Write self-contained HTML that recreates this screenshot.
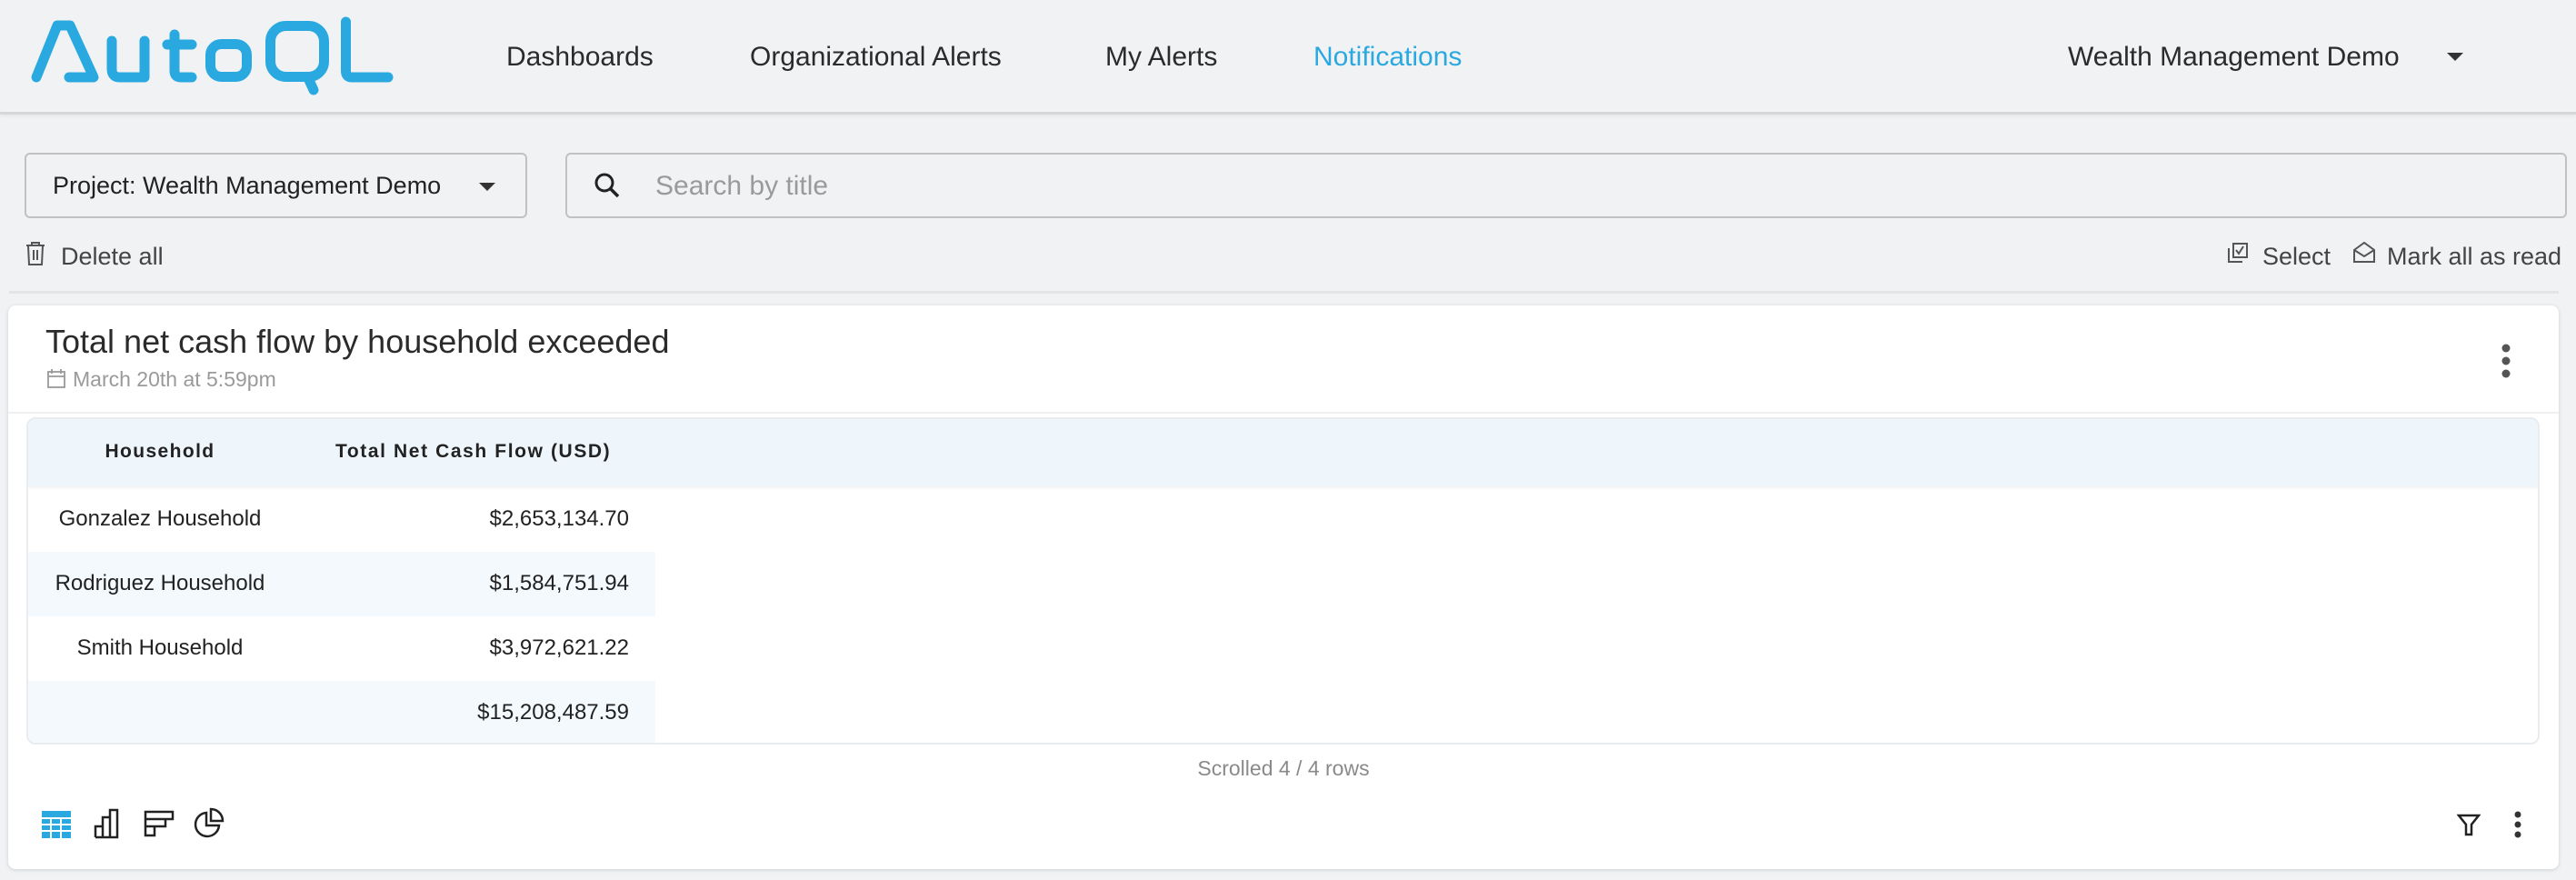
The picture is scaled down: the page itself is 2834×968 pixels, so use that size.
<!DOCTYPE html>
<html><head><meta charset="utf-8"><style>
*{margin:0;padding:0;box-sizing:border-box}
body{width:2834px;height:968px;background:#f1f2f4;font-family:"Liberation Sans",Arial,sans-serif;color:#2b2b2b;position:relative;overflow:hidden}
.a{position:absolute;white-space:nowrap}
.nav{font-size:30px;top:46px;color:#2b2b2b}
.box{position:absolute;border:2px solid #bfc1c4;border-radius:6px;background:#f1f2f4}
.card{position:absolute;left:9px;top:336px;width:2806px;height:620px;background:#fff;border-radius:8px;box-shadow:0 1px 4px rgba(0,0,0,.15)}
.cell{position:absolute;font-size:24px;color:#222}
</style></head><body>
<div class="a" style="left:0;top:0;width:2834px;height:126px;border-bottom:3px solid #d6d7d9;box-shadow:0 2px 4px rgba(0,0,0,.05)"></div>
<!-- logo -->
<svg class="a" style="left:0;top:0" width="440" height="110" viewBox="0 0 440 110">
<g fill="none" stroke="#2aa9e0" stroke-width="11" stroke-linejoin="round" stroke-linecap="round">
<path d="M40 85 L63 28 H77 L103 85 H76"/>
<path d="M123 45 V76 Q123 85 132 85 H159 V45"/>
<path d="M192 38 V78 Q192 85 199 85 H211"/>
<path d="M184 49 H211"/>
<rect x="231.5" y="48.5" width="40" height="36" rx="12"/>
<rect x="297.5" y="28.5" width="59" height="56" rx="17"/>
<path d="M339 86 L345 99"/>
<path d="M380.5 24 V78 Q380.5 85 387 85 H427"/>
</g></svg>
<div class="a nav" style="left:557px">Dashboards</div>
<div class="a nav" style="left:825px">Organizational Alerts</div>
<div class="a nav" style="left:1216px">My Alerts</div>
<div class="a nav" style="left:1445px;color:#2aa9e0">Notifications</div>
<div class="a nav" style="left:2275px">Wealth Management Demo</div>
<div class="a" style="left:2692px;top:58px;border-left:9px solid transparent;border-right:9px solid transparent;border-top:9px solid #333"></div>

<div class="box" style="left:27px;top:168px;width:553px;height:72px"></div>
<div class="a" style="left:58px;top:189px;font-size:27px;color:#222">Project: Wealth Management Demo</div>
<div class="a" style="left:527px;top:201px;border-left:9px solid transparent;border-right:9px solid transparent;border-top:9px solid #333"></div>
<div class="box" style="left:622px;top:168px;width:2202px;height:72px"></div>
<svg class="a" style="left:652px;top:188px" width="32" height="32" viewBox="0 0 32 32"><circle cx="13" cy="13" r="9" fill="none" stroke="#222" stroke-width="3"/><path d="M19.5 19.5 L28 28" stroke="#222" stroke-width="3.5"/></svg>
<div class="a" style="left:721px;top:188px;font-size:30px;color:#9a9a9a">Search by title</div>

<svg class="a" style="left:27px;top:265px" width="24" height="28" viewBox="0 0 24 28"><path d="M2 5H22M8 5V2H16V5M4 5L5 26H19L20 5M10 10V21M14 10V21" fill="none" stroke="#555" stroke-width="2"/></svg>
<div class="a" style="left:67px;top:267px;font-size:27px;color:#444">Delete all</div>
<svg class="a" style="left:2449px;top:266px" width="26" height="26" viewBox="0 0 26 26"><rect x="8" y="2" width="15" height="15" fill="none" stroke="#555" stroke-width="2"/><path d="M3 7V22H18M11 9L14 13L19 5" fill="none" stroke="#555" stroke-width="2"/></svg>
<div class="a" style="left:2489px;top:267px;font-size:27px;color:#444">Select</div>
<svg class="a" style="left:2588px;top:265px" width="26" height="26" viewBox="0 0 26 26"><path d="M2 10L13 2L24 10V23H2Z M2 10L13 17L24 10" fill="none" stroke="#555" stroke-width="2"/></svg>
<div class="a" style="left:2626px;top:267px;font-size:27px;color:#444">Mark all as read</div>
<div class="a" style="left:10px;top:320px;width:2805px;height:3px;background:#e3e4e6"></div>

<div class="card">
<div class="a" style="left:41px;top:19px;font-size:36px;color:#2b2b2b">Total net cash flow by household exceeded</div>
<svg class="a" style="left:43px;top:69px" width="20" height="22" viewBox="0 0 20 22"><rect x="1" y="4" width="18" height="17" fill="none" stroke="#999" stroke-width="1.8"/><path d="M1 9H19M5 1V6M15 1V6" stroke="#999" stroke-width="1.8"/></svg>
<div class="a" style="left:71px;top:68px;font-size:23px;color:#9a9a9a">March 20th at 5:59pm</div>
<svg class="a" style="left:2742px;top:41px" width="12" height="40" viewBox="0 0 12 40"><circle cx="6" cy="6" r="4.5" fill="#555"/><circle cx="6" cy="20" r="4.5" fill="#555"/><circle cx="6" cy="34" r="4.5" fill="#555"/></svg>
<div class="a" style="left:0;top:117px;width:2806px;height:2px;background:#eef0f2"></div>
<!-- table -->
<div class="a" style="left:20px;top:123px;width:2765px;height:360px;border:2px solid #e8ecef;border-radius:10px;overflow:hidden;background:#fff">
 <div class="a" style="left:0;top:0;width:2765px;height:74px;background:#eef6fc;box-shadow:0 2px 3px rgba(0,0,0,.06)"></div>
 <div class="a" style="left:0;top:146px;width:690px;height:71px;background:#f3f9fd"></div>
 <div class="a" style="left:0;top:288px;width:690px;height:72px;background:#f3f9fd"></div>
 <div class="a" style="left:0;top:24px;width:290px;text-align:center;font-size:21px;font-weight:bold;letter-spacing:1.4px;color:#222">Household</div>
 <div class="a" style="left:338px;top:24px;font-size:21px;font-weight:bold;letter-spacing:1.6px;color:#222">Total Net Cash Flow (USD)</div>
 <div class="cell" style="left:0;width:290px;text-align:center;top:96px">Gonzalez Household</div>
 <div class="cell" style="left:0;width:290px;text-align:center;top:167px">Rodriguez Household</div>
 <div class="cell" style="left:0;width:290px;text-align:center;top:238px">Smith Household</div>
 <div class="cell" style="right:2100px;top:96px">$2,653,134.70</div>
 <div class="cell" style="right:2100px;top:167px">$1,584,751.94</div>
 <div class="cell" style="right:2100px;top:238px">$3,972,621.22</div>
 <div class="cell" style="right:2100px;top:309px">$15,208,487.59</div>
</div>
<div class="a" style="left:0;width:2806px;text-align:center;top:496px;font-size:23px;color:#8a8a8a">Scrolled 4 / 4 rows</div>
<!-- viz icons -->
<svg class="a" style="left:36px;top:555px" width="34" height="32" viewBox="0 0 34 32"><rect x="1" y="1" width="32" height="30" fill="#2aa9e0"/><path d="M1 9H33M1 16H33M1 23H33M11 9V31M22 9V31" stroke="#fff" stroke-width="2"/></svg>
<svg class="a" style="left:94px;top:553px" width="30" height="34" viewBox="0 0 30 34"><path d="M2 32V20H10V32M10 32V10H18V32M18 32V2H26V32H2" fill="none" stroke="#222" stroke-width="2.5"/></svg>
<svg class="a" style="left:149px;top:555px" width="34" height="32" viewBox="0 0 34 32"><path d="M2 2H32V10H2ZM2 10H24V18H2ZM2 18H12V28H2Z" fill="none" stroke="#222" stroke-width="2.5"/></svg>
<svg class="a" style="left:204px;top:552px" width="34" height="36" viewBox="0 0 34 36"><path d="M14 6A13 13 0 1 0 28 20H14Z" fill="none" stroke="#222" stroke-width="2.5"/><path d="M19 2A13 13 0 0 1 32 15H19Z" fill="none" stroke="#222" stroke-width="2.5"/></svg>
<svg class="a" style="left:2694px;top:558px" width="26" height="26" viewBox="0 0 26 26"><path d="M2 3H24L16 13V24H10V13Z" fill="none" stroke="#222" stroke-width="2.5" stroke-linejoin="miter"/></svg>
<svg class="a" style="left:2756px;top:556px" width="10" height="30" viewBox="0 0 10 30"><circle cx="5" cy="4" r="3.5" fill="#333"/><circle cx="5" cy="15" r="3.5" fill="#333"/><circle cx="5" cy="26" r="3.5" fill="#333"/></svg>
</div>
</body></html>
